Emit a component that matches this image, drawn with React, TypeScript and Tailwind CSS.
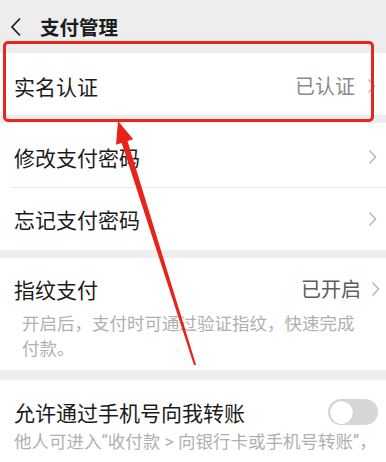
import React from 'react'

const Chevron = () => (
    <svg width="9" height="16" viewBox="0 0 9 16" className="shrink-0">
        <path d="M1.5 1.5 L7.5 8 L1.5 14.5" fill="none" stroke="#b8b8b8" strokeWidth="1.5" />
    </svg>
)

export default function App() {
    return (
        <div className="relative w-[386px] h-[462px] overflow-hidden bg-[#ededed] text-[#1b1b1b] font-['Noto_Sans_CJK_SC','Noto_Sans',sans-serif]">
            {/* header */}
            <div className="h-[53px] flex items-center pl-[10px]">
                <svg width="12" height="20" viewBox="0 0 12 20">
                    <path d="M10 1.5 L2 10 L10 18.5" fill="none" stroke="#222" strokeWidth="1.8" />
                </svg>
                <span className="ml-[18px] text-[19.5px] font-semibold leading-none">支付管理</span>
            </div>

            {/* 实名认证 */}
            <div className="bg-white h-[62px] flex items-center pl-[14px] pr-[10px] pt-1">
                <span className="text-[21px] leading-none">实名认证</span>
                <span className="ml-auto text-[20px] leading-none text-[#8a8a8a] mr-[12px]">已认证</span>
                <Chevron />
            </div>

            <div className="h-[8px]" />

            {/* passwords */}
            <div className="bg-white">
                <div className="h-[64px] flex items-center pl-[14px] pr-[9px] pt-1">
                    <span className="text-[21px] leading-none">修改支付密码</span>
                    <span className="ml-auto"><Chevron /></span>
                </div>
                <div className="ml-[12px] h-px bg-[#e6e6e6]" />
                <div className="h-[62px] flex items-center pl-[14px] pr-[9px]">
                    <span className="text-[21px] leading-none">忘记支付密码</span>
                    <span className="ml-auto"><Chevron /></span>
                </div>
            </div>

            <div className="h-[8px]" />

            {/* fingerprint */}
            <div className="bg-white h-[112px] pt-[18px] pl-[14px] pr-[6px]">
                <div className="flex items-center h-[26px]">
                    <span className="text-[21px] leading-none">指纹支付</span>
                    <span className="ml-auto text-[20px] leading-none text-[#5c5c5c] mr-[10px]">已开启</span>
                    <Chevron />
                </div>
                <p className="mt-[8px] pl-[8px] pr-[20px] text-[17.5px] leading-[25px] text-[#b0b0b0]">开启后，支付时可通过验证指纹，快速完成付款。</p>
            </div>

            <div className="h-[10px]" />

            {/* phone transfer */}
            <div className="bg-white h-[120px] pt-[19px] pl-[14px] pr-[8px]">
                <div className="flex items-center h-[26px]">
                    <span className="text-[21px] leading-none">允许通过手机号向我转账</span>
                    <div className="ml-auto w-[50px] h-[26px] rounded-full bg-[#d6d6d6] p-[1.5px] flex">
                        <div className="w-[23px] h-[23px] rounded-full bg-white shadow-[0_0_1px_rgba(0,0,0,0.3)]" />
                    </div>
                </div>
                <p className="mt-[5px] text-[17.5px] leading-[25px] text-[#b0b0b0] whitespace-nowrap font-['Roboto','Noto_Sans_CJK_SC',sans-serif]">他人可进入“收付款 &gt; 向银行卡或手机号转账”，</p>
            </div>

            {/* annotation: red box */}
            <div className="absolute left-[3px] top-[41px] w-[371px] h-[81px] border-[3px] border-[#e8261e] rounded-[5px]" />

            {/* annotation: arrow */}
            <svg className="absolute left-0 top-0" width="386" height="462" viewBox="0 0 386 462">
                <polygon
                    points="118,121 133.2,139.3 127.5,141.1 196,364.7 194,365.3 121.7,142.9 116,144.7"
                    fill="#e8231c"
                />
            </svg>
        </div>
    )
}
